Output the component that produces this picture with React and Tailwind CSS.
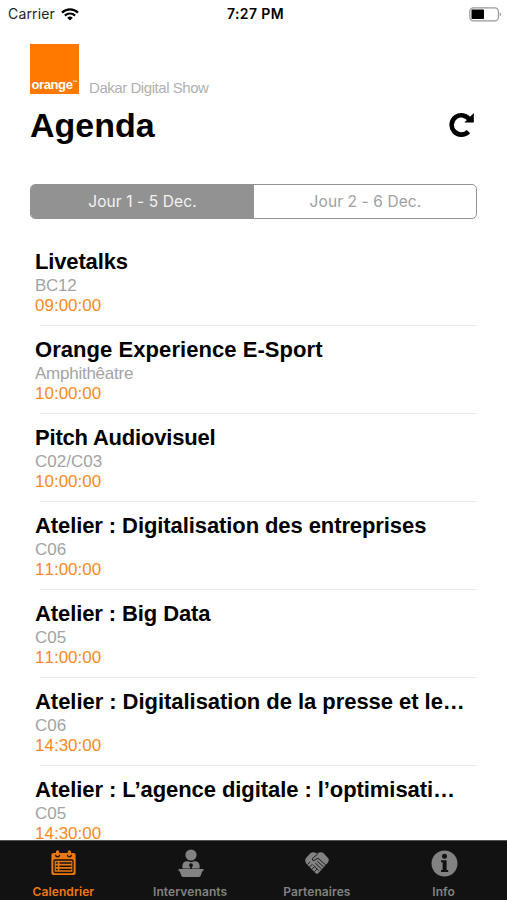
import React from 'react';

const sessions = [
  { title: 'Livetalks', room: 'BC12', time: '09:00:00', spacing: 'tracking-[-0.15px]', roomSpacing: 'tracking-[-0.3px]' },
  { title: 'Orange Experience E-Sport', room: 'Amphithêatre', time: '10:00:00', spacing: 'tracking-[0.06px]', roomSpacing: 'tracking-[-0.25px]' },
  { title: 'Pitch Audiovisuel', room: 'C02/C03', time: '10:00:00', spacing: 'tracking-[-0.2px]', roomSpacing: 'tracking-normal' },
  { title: 'Atelier : Digitalisation des entreprises', room: 'C06', time: '11:00:00', spacing: 'tracking-[-0.09px]', roomSpacing: 'tracking-normal' },
  { title: 'Atelier : Big Data', room: 'C05', time: '11:00:00', spacing: 'tracking-[-0.1px]', roomSpacing: 'tracking-normal' },
  { title: 'Atelier : Digitalisation de la presse et le…', room: 'C06', time: '14:30:00', spacing: 'tracking-[-0.04px]', roomSpacing: 'tracking-normal' },
  { title: 'Atelier : L’agence digitale : l’optimisati…', room: 'C05', time: '14:30:00', spacing: 'tracking-[-0.07px]', roomSpacing: 'tracking-normal' }
];

const WifiIcon = () => (
  <svg width="18" height="13" viewBox="0 0 18 13" fill="none" stroke="#000" strokeWidth="2.2">
    <path d="M1 4.6a11.4 11.4 0 0 1 16 0" />
    <path d="M3.9 7.6a7.2 7.2 0 0 1 10.2 0" />
    <path d="M9 12.6 6.2 9.8a4 4 0 0 1 5.6 0z" fill="#000" stroke="none" />
  </svg>
);

const BatteryIcon = () => (
  <svg width="33" height="15" viewBox="0 0 33 15">
    <rect x="0.8" y="0.8" width="28.6" height="13" rx="3.6" fill="#fff" stroke="#999" strokeWidth="1.2" />
    <rect x="2.5" y="2.6" width="12.5" height="9.4" rx="0.8" fill="#000" />
    <path d="M30.8 5.2v4.2c1.6-.6 1.6-3.6 0-4.2z" fill="#8e8e8e" />
  </svg>
);

const ReloadIcon = () => (
  <svg width="26" height="26" viewBox="0 0 26 26">
    <path d="M19.4 19.6A9.7 9.7 0 1 1 20.6 7.800" fill="none" stroke="#000" strokeWidth="4.600" />
    <path d="M24.800 1v9.600h-9.400z" fill="#000" />
  </svg>
);

const CalendarIcon = () => (
  <svg width="25" height="26" viewBox="0 0 25 26">
    <path d="M2.4 3H5V1.800a1.600 1.600 0 0 1 3.200 0V3h8.600V1.800a1.600 1.600 0 0 1 3.200 0V3h2.600a2 2 0 0 1 2 2v18a2 2 0 0 1-2 2H2.400a2 2 0 0 1-2-2V5a2 2 0 0 1 2-2z" fill="currentColor" />
    <path d="M4.600 4.800a2 2 0 0 0 4 0M16.400 4.800a2 2 0 0 0 4 0" fill="none" stroke="#121212" strokeWidth="1.200" />
    <rect x="3" y="10" width="19" height="12.500" rx="1" fill="none" stroke="#121212" strokeWidth="1.300" />
    <path d="M4.800 13h2M8.400 13h12M4.800 16.300h2M8.400 16.300h12M4.800 19.600h2M8.400 19.600h12" stroke="#121212" strokeWidth="1.500" />
  </svg>
);

const SpeakerIcon = () => (
  <svg width="26" height="29" viewBox="0 0 26 29" fill="currentColor">
    <circle cx="13" cy="6" r="5.600" />
    <path d="M4.400 19.400V17c0-3 1.800-4.800 4.600-4.800h1.200q2.800 1.800 5.600 0H17c2.800 0 4.600 1.800 4.600 4.800v2.400z" />
    <path d="M.6 20h24.800v2.200h-1.200l-1.400 4.400q-.5 1.400-1.900 1.400H5.100q-1.400 0-1.900-1.400L1.800 22.200H.6z" />
    <circle cx="13" cy="16.200" r="1.900" fill="#121212" />
    <path d="M13 16v4" stroke="#121212" strokeWidth="1.600" />
  </svg>
);

const HandshakeIcon = () => (
  <svg width="24" height="24" viewBox="0 0 24 24">
    <path d="M.6 7.400 5.600 2q2-1.400 4.200-.4l2.200.8 2.200-.8q2.200-1 4.200.4l5 5.400q.9 2-.4 4.200L13 22.400q-1.400.8-2.600-.4L1.400 12.800Q-.4 10.400.6 7.400z" fill="currentColor" />
    <g fill="none" stroke="#121212" strokeWidth="0.900" strokeLinecap="round" strokeLinejoin="round">
      <path d="M12.600 3 7.400 7.600q-.6 2 1.600 2L13 7.200l7.600 6.600" />
      <path d="m12.600 10.400 5.800 5.400M10.600 12.400l5.600 5.400M8.800 14.600l4.800 4.800" />
      <path d="m2.800 13.200 2-2M5 15.600l2.200-2.200M7.200 18l2.200-2.200M9.600 20.400l2-2" />
    </g>
  </svg>
);

const InfoIcon = () => (
  <svg width="27" height="27" viewBox="0 0 27 27">
    <circle cx="13.500" cy="13.500" r="13" fill="currentColor" />
    <circle cx="13.500" cy="6.200" r="2.500" fill="#121212" />
    <path d="M10 10.200h5.600v9.800h1.600v2H10v-2h1.600v-7.800H10z" fill="#121212" />
  </svg>
);

const tabs = [
  { label: 'Calendrier', icon: <CalendarIcon />, color: 'text-[#ee780c]' },
  { label: 'Intervenants', icon: <SpeakerIcon />, color: 'text-[#828282]' },
  { label: 'Partenaires', icon: <HandshakeIcon />, color: 'text-[#828282]' },
  { label: 'Info', icon: <InfoIcon />, color: 'text-[#828282]' }
];

const App = () => {
  return (
    <div className="flex h-[900px] w-[507px] flex-col overflow-hidden bg-white font-['Liberation_Sans',sans-serif] text-black">
      {/* Status bar */}
      <div className="grid h-7 shrink-0 grid-cols-3 items-center pl-2 pr-[5px] font-['Inter',sans-serif] text-sm">
        <div className="flex items-center gap-[6px] text-[#222]">
          <span className="tracking-[0.15px]">Carrier</span>
          <WifiIcon />
        </div>
        <span className="pl-px text-center font-semibold tracking-[0.4px]">7:27 PM</span>
        <div className="flex justify-end">
          <BatteryIcon />
        </div>
      </div>

      {/* Header */}
      <header className="shrink-0 px-[30px] pt-4">
        <div className="flex items-end gap-[10px]">
          <div className="flex h-[50px] w-[49px] items-end justify-center bg-[#ff7900] pb-px text-[13px] leading-4 font-bold text-white">
            <span className="tracking-[-0.4px]">orange</span>
            <span className="self-end pb-[6px] text-[5px] leading-[10px]">™</span>
          </div>
          <span className="relative top-[2px] text-[15px] leading-4 tracking-[-0.45px] text-[#b0b0b0]">Dakar Digital Show</span>
        </div>
        <div className="flex items-center justify-between pr-[2px] pt-[10px]">
          <h1 className="text-[34px] leading-[42px] font-bold">Agenda</h1>
          <ReloadIcon />
        </div>
      </header>

      {/* Day switch */}
      <div className="mx-[30px] mt-[38px] grid h-[35px] shrink-0 grid-cols-[223px_1fr] overflow-hidden rounded-[5px] border border-[#929292] font-['Inter',sans-serif] text-[15.5px]">
        <button className="bg-[#929292] pt-px tracking-[0.1px] text-[#f2f2f2]">Jour 1 - 5 Dec.</button>
        <button className="pt-px pl-px tracking-[0.1px] text-[#a0a0a0]">Jour 2 - 6 Dec.</button>
      </div>

      {/* Sessions */}
      <main className="mt-[19px] min-h-0 flex-1 overflow-hidden pl-[35px] pr-[30px]">
        {sessions.map((session, index) => (
          <div key={index} className="flex h-[88px] flex-col pt-[11px]">
            <h2 className={`text-[22px] leading-[26px] font-bold whitespace-nowrap ${session.spacing}`}>{session.title}</h2>
            <p className={`pt-[1px] text-[17px] leading-5 text-[#a3a3a3] ${session.roomSpacing}`}>{session.room}</p>
            <p className="text-[17px] leading-5 text-[#f98a22] [font-kerning:none]">{session.time}</p>
            <div className="mt-auto ml-[5px] h-px shrink-0 bg-[#e9e9e9]" />
          </div>
        ))}
      </main>

      {/* Tab bar */}
      <nav className="grid h-[60px] shrink-0 grid-cols-4 border-t border-[#555] bg-[#121212]">
        {tabs.map((tab) => (
          <div key={tab.label} className={`flex flex-col items-center ${tab.color}`}>
            <div className="flex h-[43px] items-center justify-center pt-px pl-px">{tab.icon}</div>
            <span className="font-['Inter',sans-serif] text-xs leading-4 font-semibold tracking-[0.1px]">{tab.label}</span>
          </div>
        ))}
      </nav>
    </div>
  );
};

export default App;
